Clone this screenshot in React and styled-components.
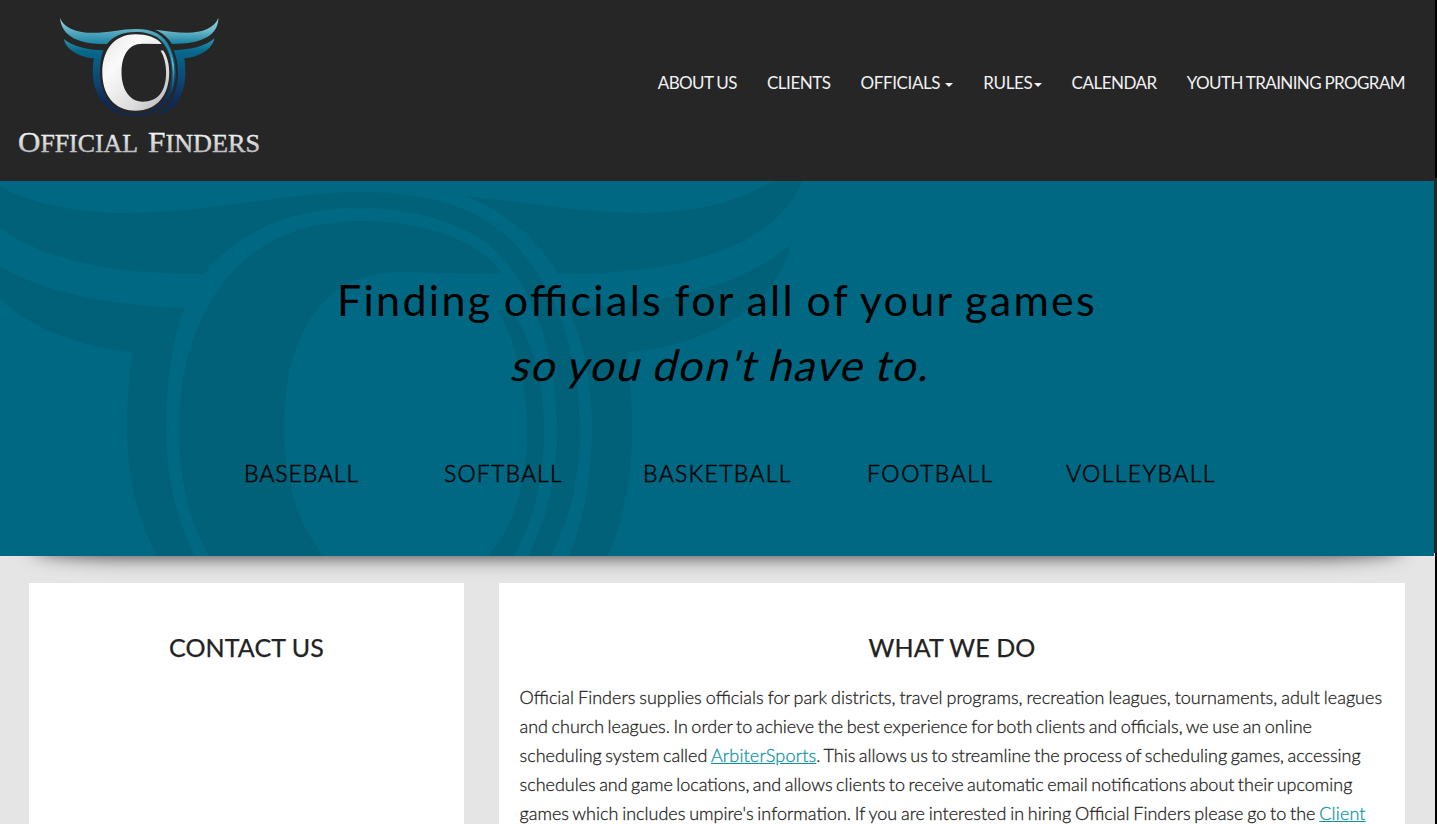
import React from "react";
import styled, { createGlobalStyle } from "styled-components";

const GlobalStyle = createGlobalStyle`
  *, *::before, *::after { box-sizing: border-box; }
  body {
    margin: 0;
    background: #e5e5e5;
    color: #222;
    font-family: Lato, sans-serif;
    overflow: hidden;
  }
`;

const Window = styled.div`
  display: flex;
  width: 1437px;
  height: 824px;
  overflow: hidden;
`;

const Page = styled.div`
  width: 1435px;
  height: 824px;
  overflow: hidden;
  background: #e5e5e5;
`;

const ScrollEdge = styled.div`
  flex: 1;
  display: flex;
  flex-direction: column;
  background: #000;
  padding-top: 178px;
`;

const ScrollThumb = styled.div`
  height: 375px;
  background: #262626;
`;

const Header = styled.header`
  display: flex;
  justify-content: space-between;
  align-items: flex-start;
  height: 181px;
  padding-right: 30px;
  background: #262626;
`;

const LogoDrawing = styled.svg`
  display: block;
  width: 280px;
  height: 181px;
`;

const Nav = styled.nav`
  display: flex;
  gap: 30px;
  padding-top: 72px;
`;

const NavLink = styled.a`
  display: flex;
  align-items: center;
  gap: ${(p) => p.$caretGap || 0}px;
  font-size: 17px;
  line-height: 22px;
  letter-spacing: ${(p) => p.$spacing || -0.45}px;
  word-spacing: -0.3px;
  color: #f2f2f2;
  white-space: nowrap;
`;

const Caret = styled.span`
  border-top: 4px solid #f2f2f2;
  border-left: 4px solid transparent;
  border-right: 4px solid transparent;
  margin-top: 3px;
`;

const HeroWrap = styled.div`
  position: relative;
  z-index: 0;
  display: flex;
  background: linear-gradient(#262626, #262626) right top / 1px 372px no-repeat;

  &::after {
    content: "";
    position: absolute;
    z-index: -1;
    top: 50%;
    bottom: 0;
    left: 34px;
    right: 34px;
    border-radius: 100px / 10px;
    box-shadow: 0 0 20px rgba(0, 0, 0, 0.8);
  }
`;

const Hero = styled.section`
  position: relative;
  width: 1434px;
  height: 375px;
  overflow: hidden;
  background: #006882;
  color: #000;
`;

const Watermark = styled.svg`
  position: absolute;
  inset: 0;
  width: 1434px;
  height: 375px;
`;

const HeroContent = styled.div`
  position: relative;
  padding-top: 86px;
`;

const Tagline = styled.h1`
  margin: 0;
  font-size: 43px;
  font-weight: 400;
  line-height: 65px;
  letter-spacing: 2.3px;
  word-spacing: -1.8px;
  font-feature-settings: "liga" 1;
  text-align: center;
  white-space: nowrap;
`;

const Emphasis = styled.em`
  display: inline-block;
  margin-left: 12px;
  font-style: normal;
  letter-spacing: 1.7px;
  transform: skewX(-14deg);
`;

const Sports = styled.ul`
  display: flex;
  margin: 61px 0 0;
  padding: 0 0 0 244px;
  list-style: none;
`;

const Sport = styled.li`
  width: ${(p) => p.$width}px;
  font-size: 23px;
  font-weight: 300;
  line-height: 30px;
  letter-spacing: ${(p) => p.$spacing}px;
  white-space: nowrap;
  -webkit-text-stroke: 0.5px #000;
`;

const Cards = styled.main`
  display: flex;
  gap: 35px;
  padding: 27px 30px 0 29px;
`;

const Card = styled.section`
  width: ${(p) => p.$width}px;
  height: 400px;
  padding: 46px 20px 0;
  background: #fff;
`;

const CardTitle = styled.h2`
  margin: 0 0 17px;
  font-size: 25px;
  font-weight: 400;
  line-height: 37px;
  letter-spacing: 0.1px;
  text-align: center;
  color: #222;
  -webkit-text-stroke: 0.25px #222;
`;

const Copy = styled.p`
  margin: 0;
  font-size: 18px;
  font-weight: 300;
  line-height: 29px;
  color: #222;
  white-space: nowrap;
  -webkit-text-stroke: 0.28px currentColor;
`;

const Line = styled.span`
  display: block;
  padding-left: 0.5px;
  word-spacing: ${(p) => p.$gap}px;
`;

const TextLink = styled.a`
  color: #0f94a6;
  letter-spacing: 0.15px;
  text-decoration: underline;
`;

/* Bull emblem outlines, shared by the header logo and the hero background. */
const BULL = {
  leftHorn:
    "M-52 130C-36 180 30 213 127 213C205 213 290 192 360 192C408 192 448 200 480 217C538 250 580 330 580 430C580 550 510 668 357 668C200 668 127 550 127 430C127 401 129 374 133 352C70 347 -15 315 -31 246C20 288 95 305 184 308C171 345 166 385 166 430C166 545 230 657 357 657C490 657 557 550 557 430C557 350 530 272 480 238C447 219 410 208 360 208C290 208 240 230 204 274C110 273 -40 264 -52 130Z",
  rightHorn:
    "M465 196C530 203 585 213 640 213C725 213 794 185 812 131C813 220 735 274 559 274C538 241 505 210 465 196Z",
  rightBand:
    "M568 308C650 306 745 288 791 243C778 305 710 345 627 352C630 377 632 403 632 430C632 550 575 654 472 660C555 622 592 530 592 430C592 382 584 342 568 308Z",
  ring:
    "M503 274C475 237 420 221 360 221C234 221 179 320 179 430C179 549 241 638 360 638C482 638 544 549 544 430C544 387 534 342 511 310L497 310C518 345 527 387 527 430C527 533 482 589 400 589C320 589 284 510 284 430C284 345 315 272 400 272Z",
};

function BullShapes({ band, horn, ring, swoosh }) {
  return (
    <>
      <path d={BULL.leftHorn} fill={band} />
      <path d={BULL.rightHorn} fill={horn} />
      <path d={BULL.rightBand} fill={band} />
      <path d={BULL.ring} fill={ring} />
      {swoosh && (
        <path
          d="M470 215C535 255 572 330 572 430C572 480 563 520 550 555C558 515 563 475 563 430C563 335 528 255 470 215Z"
          fill={swoosh}
        />
      )}
    </>
  );
}

function Logo() {
  return (
    <LogoDrawing viewBox="0 0 280 181" role="img" aria-label="Official Finders">
      <defs>
        <linearGradient id="band" gradientUnits="userSpaceOnUse" x1="0" y1="130" x2="0" y2="668">
          <stop offset="0" stopColor="#b5e2ea" />
          <stop offset="0.1" stopColor="#6cb8ca" />
          <stop offset="0.25" stopColor="#2389a6" />
          <stop offset="0.34" stopColor="#07688c" />
          <stop offset="0.65" stopColor="#0c4672" />
          <stop offset="0.85" stopColor="#0f2a55" />
          <stop offset="1" stopColor="#12274d" />
        </linearGradient>
        <linearGradient id="horn" gradientUnits="userSpaceOnUse" x1="0" y1="130" x2="0" y2="274">
          <stop offset="0" stopColor="#8fd0dc" />
          <stop offset="0.5" stopColor="#6cb8ca" />
          <stop offset="1" stopColor="#15809e" />
        </linearGradient>
        <linearGradient id="silver" x1="0" y1="0" x2="1" y2="1">
          <stop offset="0" stopColor="#e4e4e6" />
          <stop offset="0.3" stopColor="#fafafa" />
          <stop offset="0.7" stopColor="#dcdcde" />
          <stop offset="1" stopColor="#aeb0b5" />
        </linearGradient>
        <linearGradient id="swoosh" x1="0" y1="0" x2="0" y2="1">
          <stop offset="0" stopColor="#2a93af" stopOpacity="0.2" />
          <stop offset="0.5" stopColor="#6bbdd0" />
          <stop offset="1" stopColor="#1c5f8d" stopOpacity="0.1" />
        </linearGradient>
        <linearGradient id="letters" gradientUnits="userSpaceOnUse" x1="0" y1="131" x2="0" y2="154">
          <stop offset="0" stopColor="#fafafa" />
          <stop offset="1" stopColor="#b9b9bb" />
        </linearGradient>
      </defs>
      <g transform="translate(69.5 -6.2) scale(0.1833)">
        <BullShapes band="url(#band)" horn="url(#horn)" ring="url(#silver)" swoosh="url(#swoosh)" />
      </g>
      <g
        fontFamily="'Liberation Serif', serif"
        fontSize="25"
        fill="url(#letters)"
        stroke="url(#letters)"
        strokeWidth="0.4"
      >
        <text x="18" y="152.3" textLength="120" lengthAdjust="spacingAndGlyphs">
          <tspan fontSize="30">O</tspan>FFICIAL
        </text>
        <text x="148" y="152.3" textLength="112" lengthAdjust="spacingAndGlyphs">
          <tspan fontSize="30">F</tspan>INDERS
        </text>
      </g>
    </LogoDrawing>
  );
}

export default function App() {
  return (
    <>
      <GlobalStyle />
      <Window>
        <Page>
          <Header>
            <Logo />
            <Nav>
              <NavLink $spacing={-0.6}>ABOUT US</NavLink>
              <NavLink>CLIENTS</NavLink>
              <NavLink $caretGap={5} $spacing={-0.4}>OFFICIALS<Caret /></NavLink>
              <NavLink $caretGap={1} $spacing={-0.3}>RULES<Caret /></NavLink>
              <NavLink $spacing={-0.5}>CALENDAR</NavLink>
              <NavLink $spacing={-0.6}>YOUTH TRAINING PROGRAM</NavLink>
            </Nav>
          </Header>
          <HeroWrap>
            <Hero>
              <Watermark viewBox="0 181 1434 375" aria-hidden="true">
                <BullShapes band="#006178" horn="#006178" ring="#006178" />
              </Watermark>
              <HeroContent>
                <Tagline>
                  Finding officials for all of your games
                  <br />
                  <Emphasis>so you don't have to.</Emphasis>
                </Tagline>
                <Sports>
                  <Sport $width={200} $spacing={0.9}>BASEBALL</Sport>
                  <Sport $width={199} $spacing={1.15}>SOFTBALL</Sport>
                  <Sport $width={224} $spacing={1.3}>BASKETBALL</Sport>
                  <Sport $width={199} $spacing={1.55}>FOOTBALL</Sport>
                  <Sport $width={160} $spacing={1.4}>VOLLEYBALL</Sport>
                </Sports>
              </HeroContent>
            </Hero>
          </HeroWrap>
          <Cards>
            <Card $width={435}>
              <CardTitle>CONTACT US</CardTitle>
            </Card>
            <Card $width={906}>
              <CardTitle>WHAT WE DO</CardTitle>
              <Copy>
                <Line $gap={-0.87}>
                  Official Finders supplies officials for park districts, travel programs, recreation leagues, tournaments, adult leagues
                </Line>
                <Line $gap={-1.4}>
                  and church leagues. In order to achieve the best experience for both clients and officials, we use an online
                </Line>
                <Line $gap={-1.35}>
                  scheduling system called <TextLink>ArbiterSports</TextLink>. This allows us to streamline the process of scheduling games, accessing
                </Line>
                <Line $gap={-1.5}>
                  schedules and game locations, and allows clients to receive automatic email notifications about their upcoming
                </Line>
                <Line $gap={-1.1}>
                  games which includes umpire's information. If you are interested in hiring Official Finders please go to the <TextLink>Client</TextLink>
                </Line>
              </Copy>
            </Card>
          </Cards>
        </Page>
        <ScrollEdge>
          <ScrollThumb />
        </ScrollEdge>
      </Window>
    </>
  );
}
